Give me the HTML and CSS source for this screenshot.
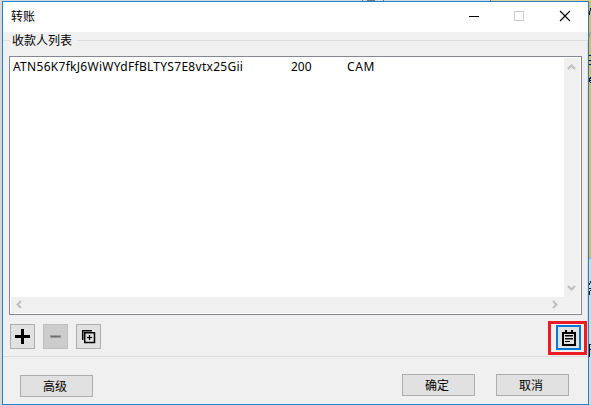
FILE: index.html
```
<!DOCTYPE html>
<html lang="zh-CN">
<head>
<meta charset="utf-8">
<title>转账</title>
<link rel="stylesheet" href="styles.css">
</head>
<body>
<div class="backdrop" aria-hidden="true">
  <svg width="591" height="405" shape-rendering="crispEdges">
    <path fill="#d8d8d8" d="M0 0h591v405H0z"/>
    <path fill="#e3cf87" d="M491 0h100v1H491z"/>
    <path fill="#d7bc76" d="M589 1h2v256h-2z"/>
    <path fill="#a9a9a9" d="M589 257h2v2h-2z"/>
    <path fill="#777" d="M362 0h1v1h-1zM367 0h8v1h-8zM383 0h1v1h-1zM490 0h1v1h-1z"/>
    <path fill="#111" d="M590 8h1v3h-1zM589 11h1v4h-1zM589 55h2v1h-2zM589 60h2v1h-2zM589 64h2v1h-2zM589 78h1v4h-1zM590 77h1v2h-1zM590 80h1v1h-1zM590 82h1v1h-1zM590 281h1v2h-1zM589 283h1v2h-1zM589 288h2v1h-2zM590 290h1v1h-1zM589 291h1v4h-1zM589 344h2v1h-2zM589 345h1v12h-1zM589 349h2v1h-2z"/>
    <path fill="#9a9065" d="M590 32h1v2h-1zM589 34h1v3h-1z"/>
  </svg>
</div>
<main class="window">
  <header class="titlebar">
    <h1 class="title">转账</h1>
    <svg class="controls" width="104" height="12" viewBox="0 0 104 12">
      <path d="M2 6.500h10" stroke="#000"/>
      <path d="M47.500 1.500h9v9h-9z" fill="none" stroke="#c8c8c8"/>
      <path d="M93 1l10 10M103 1l-10 10" stroke="#000" stroke-width="1.100"/>
    </svg>
  </header>
  <fieldset class="group">
    <legend class="legend">收款人列表</legend>
    <div class="listbox">
      <div class="rows">
        <div class="row"><span class="address">ATN56K7fkJ6WiWYdFfBLTYS7E8vtx25Gii</span><span class="amount">200</span><span class="asset">CAM</span></div>
      </div>
      <div class="vscroll">
        <svg width="9" height="6" viewBox="0 0 9 6"><path class="chevron" d="M1 5l3.500-3.500L8 5"/></svg>
        <svg width="9" height="6" viewBox="0 0 9 6"><path class="chevron" d="M1 1l3.500 3.500L8 1"/></svg>
      </div>
      <div class="hscroll">
        <svg width="6" height="9" viewBox="0 0 6 9"><path class="chevron" d="M5 1L1.500 4.500 5 8"/></svg>
        <svg width="6" height="9" viewBox="0 0 6 9"><path class="chevron" d="M1 1l3.500 3.500L1 8"/></svg>
      </div>
    </div>
    <div class="tools">
      <button class="tool" aria-label="+"><svg width="15" height="15"><path d="M6 0h3v6h6v3H9v6H6V9H0V6h6z"/></svg></button>
      <button class="tool disabled" aria-label="-"><svg width="11" height="3"><path fill="#9d9d9d" d="M0 0h11v3H0z"/><path fill="#6b6b6b" d="M1 1h9v1H1z"/></svg></button>
      <button class="tool" aria-label="++"><svg width="15" height="15"><path d="M1.700 11V1.700H11" fill="none" stroke="#000" stroke-width="1.500"/><path d="M3.700 3.700h9.800v9.800H3.700z" fill="none" stroke="#000" stroke-width="1.500"/><path d="M8 6h1v2h2v1H9v2H8V9H6V8h2z" stroke="#000" stroke-width=".2"/></svg></button>
      <div class="marker">
        <button class="tool focused" aria-label="paste"><svg width="14" height="16" shape-rendering="crispEdges"><path fill-rule="evenodd" d="M3 0h2v2h4V0h2v2h3v14H0V2h3zM2 4v10h10V4z"/><path d="M3 5h8v1H3zM3 8h8v1H3zM3 11h5v1H3z"/><path fill="#777" d="M3 6h8v1H3zM3 9h8v1H3z"/></svg></button>
      </div>
    </div>
  </fieldset>
  <footer class="actions">
    <button class="push advanced">高级</button>
    <button class="push">确定</button>
    <button class="push">取消</button>
  </footer>
</main>
</body>
</html>
```
FILE: styles.css
```
* { box-sizing: border-box; }
body {
  margin: 0;
  padding: 1px 2px 0;
  width: 591px;
  height: 405px;
  overflow: hidden;
  font: 12px/16px "Noto Sans", "Noto Sans CJK SC", sans-serif;
  color: #000;
}
svg { display: block; flex: none; }
.backdrop { position: absolute; inset: 0; z-index: -1; }
.window {
  display: flex;
  flex-direction: column;
  width: 587px;
  height: 404px;
  border: 1px solid #1883d7;
  background: #f0f0f0;
}
.titlebar {
  display: flex;
  align-items: center;
  justify-content: space-between;
  flex: none;
  height: 30px;
  padding: 0 17px 2px 8px;
  background: #fff;
}
.title { margin: 2px 0 0; font-size: 12px; font-weight: 400; }
.group {
  display: flex;
  flex-direction: column;
  flex: none;
  position: relative;
  width: 585px;
  height: 325px;
  margin: 0;
  padding: 8px 0 0 6px;
  border: 0;
}
.group::before {
  content: "";
  position: absolute;
  inset: 8px 0 -2px;
  border: 1px solid #dcdcdc;
  border-left: 0;
}
.legend {
  position: relative;
  float: left;
  width: 67px;
  height: 16px;
  margin-top: -7px;
  margin-left: 1px;
  padding: 0 0 0 2px;
  background: #f0f0f0;
  white-space: nowrap;
}
.listbox {
  display: grid;
  grid-template-columns: 1fr 16px;
  grid-template-rows: 1fr 16px;
  position: relative;
  width: 573px;
  height: 259px;
  margin-top: 7px;
  padding: 1px;
  border: 1px solid #828790;
  background: #fff;
}
.row { display: flex; padding: 1px 0 0 2px; }
.address { width: 278px; letter-spacing: 0.29px; }
.amount { width: 56px; }
.asset { letter-spacing: 0.6px; }
.vscroll, .hscroll {
  display: flex;
  align-items: center;
  justify-content: space-between;
  background: #f0f0f0;
}
.vscroll { flex-direction: column; padding: 6px 1px 6px 0; }
.hscroll { grid-column: 1 / 3; padding: 0 22px 1px 5px; }
.chevron { fill: none; stroke: #bfbfbf; stroke-width: 2; }
.tools {
  display: flex;
  position: relative;
  gap: 8px;
  padding: 6px 0 0 1px;
}
button {
  display: flex;
  align-items: center;
  justify-content: center;
  padding: 0;
  border: 1px solid #adadad;
  background: #e1e1e1;
  color: #000;
  font: inherit;
}
.tool { width: 25px; height: 25px; margin-top: 3px; }
.disabled { border-color: #bfbfbf; background: #ccc; }
.marker {
  width: 39px;
  height: 34px;
  margin-left: auto;
  margin-right: 1px;
  padding: 1px 0 0 5px;
  border: 3px solid #ed1c24;
}
.focused { margin: 0; padding: 1px 0 0 1px; border: 2px solid #0078d7; }
.actions {
  display: flex;
  gap: 21px;
  padding: 17px 19px 0 17px;
}
.push { width: 73px; height: 22px; padding: 2px 3px 0 0; }
.advanced { margin: 1px auto 0 0; }
```
